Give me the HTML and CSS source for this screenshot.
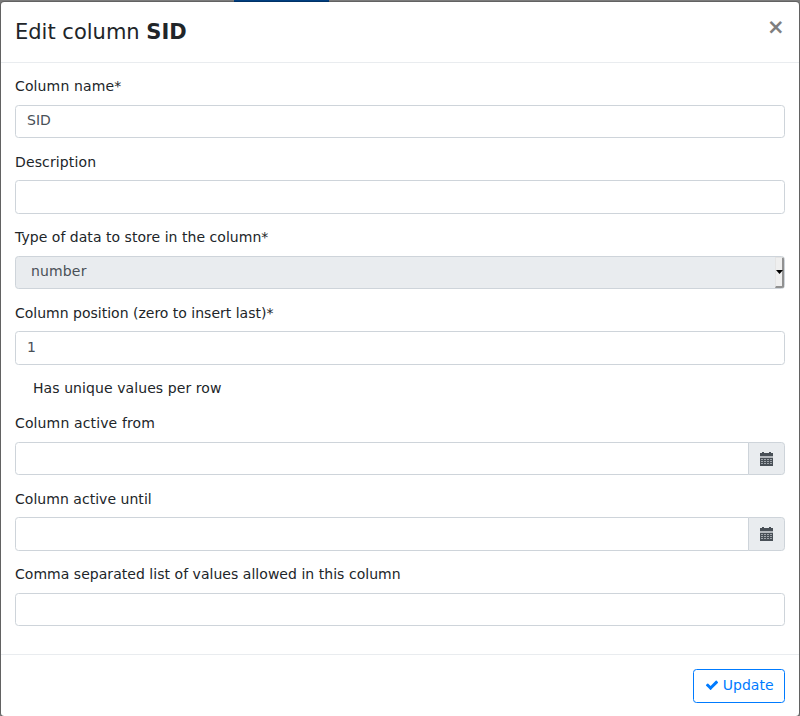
FILE: index.html
```html
<!DOCTYPE html>
<html lang="en">
<head>
<meta charset="utf-8">
<title>Edit column</title>
<link rel="stylesheet" href="styles.css">
</head>
<body>
<svg class="symbols" aria-hidden="true">
  <symbol id="calendar" viewBox="0 0 13 14">
    <path fill="currentColor" d="M2 0h2v1h5V0h2v1h2v3H0V1h2z"/>
    <path fill="#b4b8bd" d="M0 4h13v2H0z"/>
    <path fill="currentColor" d="M0 6h13v8H0z"/>
    <path stroke="#a0a5ab" d="M1 7.5h11M1 9.5h11M1 11.5h11" stroke-dasharray="2 1" fill="none"/>
  </symbol>
</svg>
<div class="backdrop-tab"></div>
<form class="modal">
  <header class="modal-header">
    <h1 class="title">Edit column <strong>SID</strong></h1>
    <button class="close" type="button">×</button>
  </header>
  <div class="modal-body">
    <div class="group">
      <label class="wide">Column name*</label>
      <div class="control">SID</div>
    </div>
    <div class="group">
      <label class="wide">Description</label>
      <div class="control"></div>
    </div>
    <div class="group">
      <label>Type of data to store in the column*</label>
      <div class="control select">number<span class="arrow"><svg width="7" height="4" viewBox="0 0 7 4"><path d="M0 0h7L3.5 4z"/></svg></span></div>
    </div>
    <div class="group">
      <label class="narrow">Column position (zero to insert last)*</label>
      <div class="control">1</div>
    </div>
    <div class="group check">Has unique values per row</div>
    <div class="group">
      <label class="wide">Column active from</label>
      <div class="input-group">
        <div class="control"></div>
        <span class="addon"><svg width="13" height="14"><use href="#calendar"/></svg></span>
      </div>
    </div>
    <div class="group">
      <label>Column active until</label>
      <div class="input-group">
        <div class="control"></div>
        <span class="addon"><svg width="13" height="14"><use href="#calendar"/></svg></span>
      </div>
    </div>
    <div class="group">
      <label>Comma separated list of values allowed in this column</label>
      <div class="control"></div>
    </div>
  </div>
  <footer class="modal-footer">
    <button class="update" type="button"><svg width="14" height="14" viewBox="0 0 1792 1792"><path fill="currentColor" d="M1671 566q0 40-28 68l-724 724-136 136q-28 28-68 28t-68-28l-136-136-362-362q-28-28-28-68t28-68l136-136q28-28 68-28t68 28l294 295 656-657q28-28 68-28t68 28l136 136q28 28 28 68z"/></svg><span>Update</span></button>
  </footer>
</form>
</body>
</html>
```
FILE: styles.css
```css
* { box-sizing: border-box; }
body {
  margin: 0;
  padding-top: 1px;
  height: 716px;
  overflow: hidden;
  background: #7b7b7b;
  color: #212529;
  font: 14px/21px "DejaVu Sans", sans-serif;
}
.symbols { position: absolute; width: 0; height: 0; }
.backdrop-tab {
  position: absolute;
  top: 0;
  left: 234px;
  width: 95px;
  height: 2px;
  background: #003e80;
}
.modal {
  position: relative;
  height: 716px;
  border: 1px solid rgba(0, 0, 0, .2);
  border-radius: 4.2px;
  background: #fff;
  background-clip: padding-box;
}
.modal-header {
  display: flex;
  justify-content: space-between;
  align-items: flex-start;
  padding: 14px;
  border-bottom: 1px solid #e9ecef;
}
.title { margin: 0; padding-top: 1px; font-size: 21px; line-height: 30.5px; font-weight: 400; }
.close {
  margin: -13px -13.5px -15px auto;
  padding: 14px;
  border: 0;
  background: none;
  color: #7f7f7f;
  font: 700 21px/21px "DejaVu Sans", sans-serif;
}
.modal-body { padding: 14px; }
.group { margin-bottom: 14px; }
label { display: block; height: 21.3px; margin: -.3px 0 7px; letter-spacing: .035px; }
.wide { letter-spacing: .13px; }
.narrow { letter-spacing: 0; }
.group.check { height: 21.3px; margin-top: -14.3px; padding-left: 18px; letter-spacing: .08px; }
.group:has(+ .check) { margin-bottom: 28px; }
.control {
  height: 33.5px;
  padding: 4.75px 11px;
  border: 1px solid #ced4da;
  border-radius: 3.5px;
  background: #fff;
  color: #495057;
}
.select {
  display: flex;
  justify-content: space-between;
  padding: 0 0 0 15px;
  background: #e9ecef;
  line-height: 29px;
  letter-spacing: .15px;
}
.arrow {
  display: flex;
  align-items: center;
  justify-content: center;
  width: 9px;
  border: solid;
  border-width: 1px 2px 2px 1px;
  border-color: #e4e4e4 #919191 #919191 #e4e4e4;
  border-radius: 0 2px 2px 0;
  background: #efefef;
}
.arrow svg { flex: none; }
.input-group { display: flex; }
.input-group .control { flex: 1; border-radius: 3.5px 0 0 3.5px; }
.addon {
  display: flex;
  align-items: center;
  justify-content: center;
  width: 37px;
  margin-left: -1px;
  padding-top: 1px;
  border: 1px solid #ced4da;
  border-radius: 0 3.5px 3.5px 0;
  background: #e9ecef;
  color: #495057;
}
.modal-footer {
  display: flex;
  justify-content: flex-end;
  padding: 14px;
  border-top: 1px solid #e9ecef;
}
.update {
  display: flex;
  align-items: center;
  gap: 4px;
  height: 33.5px;
  padding: 0 10.5px;
  border: 1px solid #007bff;
  border-radius: 3.5px;
  background: #fff;
  color: #007bff;
  font: 14px/21px "DejaVu Sans", sans-serif;
}
.update svg { position: relative; top: -1px; }
```
